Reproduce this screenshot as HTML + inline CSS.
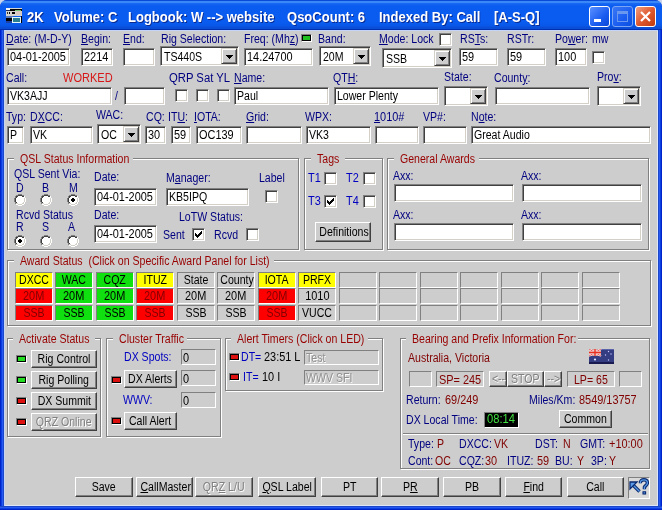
<!DOCTYPE html>
<html><head><meta charset="utf-8"><style>
*{margin:0;padding:0;box-sizing:border-box}
html,body{width:662px;height:510px;overflow:hidden}
body{position:relative;background:#c8d4ec;font-family:"Liberation Sans",sans-serif;font-size:12px}
#frame{position:absolute;left:0;top:0;width:662px;height:510px;border-radius:7px 7px 0 0;background:linear-gradient(to right,#0022cc 0,#0022cc 1px,#0a40e0 1px,#0a40e0 2px,#2858f0 2px,#2858f0 3px,#1a48c8 3px,#1a48c8 659px,#2858f0 659px,#2858f0 660px,#0a40e0 660px,#0a40e0 661px,#0022cc 661px)}
#fbot{position:absolute;left:0;top:506px;width:662px;height:4px;background:linear-gradient(#1a48c8 0,#1a48c8 1px,#2858f0 1px,#2858f0 2px,#0a40e0 2px,#0a40e0 3px,#0022cc 3px)}
#win{position:absolute;left:4px;top:30px;width:654px;height:476px;background:#cdcdcd;box-shadow:inset 1px 1px #c4d4f8,inset -1px -1px #dde6f8}
.t,.gt{position:absolute;white-space:nowrap;line-height:13px;letter-spacing:0}
.t{transform:scaleX(.88);transform-origin:0 0}
.sl{display:inline-block;transform:scaleX(.88);transform-origin:0 0}
.sc{display:inline-block;transform:scaleX(.88)}
.gt{color:#980000;background:#cdcdcd;padding-left:6px}
.e,.st{position:absolute;background:#fff;border:1px solid;border-color:#808080 #fff #fff #808080;box-shadow:inset 1px 1px #404040,inset -1px -1px #d4d0c8;overflow:hidden}
.e span,.st span{position:absolute;top:2px;line-height:13px;white-space:nowrap;letter-spacing:0;color:#000;transform:scaleX(.88);transform-origin:0 0}
.st{background:#cdcdcd;box-shadow:none;border-color:#808080 #fff #fff #808080}
.st span{color:inherit}
.cb{position:absolute;width:13px;height:13px;background:#fff;border:1px solid;border-color:#808080 #fff #fff #808080;box-shadow:inset 1px 1px #404040,inset -1px -1px #d4d0c8}
.rd{position:absolute;width:12px;height:12px;border-radius:50%;background:#fff;border:1px solid;border-color:#808080 #fff #fff #808080}
.rd .dot{position:absolute;left:3px;top:3px;width:4px;height:4px;border-radius:50%;background:#000}
.cbtn{position:absolute;right:1px;top:1px;width:16px;background:#cdcdcd;border:1px solid;border-color:#d4d0c8 #404040 #404040 #d4d0c8;box-shadow:inset 1px 1px #fff,inset -1px -1px #808080}
.cbtn i{position:absolute;left:4px;top:6px;width:0;height:0;border-left:3.5px solid transparent;border-right:3.5px solid transparent;border-top:4px solid #000}
.b{position:absolute;background:#cdcdcd;border:1px solid;border-color:#fff #404040 #404040 #fff;box-shadow:inset -1px -1px #808080;text-align:center;white-space:nowrap;letter-spacing:0}
.g{position:absolute;border:1px solid #808080;box-shadow:inset 1px 1px #fff,1px 1px #fff}
.led{position:absolute;width:11px;height:8px;border:1px solid;border-color:#808080 #fff #fff #808080}
.cell{position:absolute;width:38px;height:16px;border:1px solid;border-color:#808080 #fff #fff #808080;text-align:center;line-height:14px;letter-spacing:0;color:#000}
u{text-decoration:underline}

#titlebar{position:absolute;left:0;top:0;width:662px;height:30px;border-radius:7px 7px 0 0;background:linear-gradient(#0a4ad8 0px,#0a4ad8 1px,#3a88f8 1px,#3a88f8 3px,#1a6af4 3px,#0a5cf0 6px,#0a5cf0 22px,#0858e8 26px,#0a4ed8 27px,#0a4ed8 29px,#0030b0 29px,#0030b0 30px)}
.tt{position:absolute;top:9px;font-weight:bold;font-size:14px;line-height:16px;transform:scaleX(.93);transform-origin:0 0;color:#fff;white-space:nowrap;text-shadow:1px 1px #0a2a90}
.a{position:absolute}
.wb{position:absolute;top:6px;width:21px;height:21px;border:1px solid #fff;border-radius:3px}
</style></head>
<body>
<div id="frame"></div><div id="titlebar"></div><div id="fbot"></div><div id="win"></div>

<div class="wb" style="left:589px;background:linear-gradient(135deg,#5a90ff,#1a5cf0 60%,#0a48d8)"><div class="a" style="left:4px;top:12px;width:7px;height:3px;background:#fff"></div></div>
<div class="wb" style="left:612px;border-color:#7aa4f4;background:linear-gradient(135deg,#3a78f4,#1a5cf0 60%,#0a50e0)"><div class="a" style="left:4px;top:4px;width:11px;height:11px;border:1px solid #6a98ee;border-top-width:3px"></div></div>
<div class="wb" style="left:635px;background:linear-gradient(135deg,#f0a080,#e05a30 50%,#c03a10)"><svg class="a" style="left:4px;top:4px" width="11" height="11"><path d="M1 1L10 10M10 1L1 10" stroke="#fff" stroke-width="2.2"/></svg></div>
<svg class="a" style="left:6px;top:8px" width="16" height="15" shape-rendering="crispEdges">
<rect x="0" y="0" width="16" height="8" fill="#d4d4d0"/>
<rect x="0" y="0" width="4" height="2" fill="#f4f4f4"/>
<rect x="4" y="1" width="12" height="2" fill="#000"/>
<rect x="0" y="2" width="4" height="1" fill="#203050"/>
<rect x="9" y="2" width="6" height="1" fill="#70c070"/>
<rect x="1" y="4" width="1" height="2" fill="#403020"/><rect x="3" y="4" width="1" height="2" fill="#000"/>
<rect x="6" y="4" width="3" height="2" fill="#000"/>
<rect x="10" y="3" width="6" height="4" fill="#d8c8c0"/>
<rect x="0" y="8" width="7" height="2" fill="#5878b8"/>
<rect x="0" y="10" width="6" height="3" fill="#000"/>
<rect x="0" y="13" width="6" height="2" fill="#2040a0"/>
<rect x="6" y="9" width="9" height="6" fill="#e8f8f8"/>
<rect x="7" y="10" width="7" height="4" fill="#2a8090"/>
<rect x="15" y="8" width="1" height="7" fill="#000"/>
</svg>

<div class="tt" style="left:27px">2K</div>
<div class="tt" style="left:54px">Volume: C</div>
<div class="tt" style="left:128px">Logbook: W --&gt; website</div>
<div class="tt" style="left:287px">QsoCount: 6</div>
<div class="tt" style="left:379px">Indexed By: Call</div>
<div class="tt" style="left:494px">[A-S-Q]</div>
<div class="t" style="left:6px;top:33px;color:#000080;transform:scaleX(0.88);"><u>D</u>ate: (M-D-Y)</div>
<div class="t" style="left:81px;top:33px;color:#000080;transform:scaleX(0.88);"><u>B</u>egin:</div>
<div class="t" style="left:123px;top:33px;color:#000080;transform:scaleX(0.88);"><u>E</u>nd:</div>
<div class="t" style="left:161px;top:33px;color:#000080;transform:scaleX(0.88);">Rig Selection:</div>
<div class="t" style="left:244px;top:33px;color:#000080;transform:scaleX(0.88);">Freq: (Mh<u>z</u>)</div>
<div class="led" style="left:301px;top:34px"><div style="width:9px;height:6px;border:1px solid #000;background:#20c020"></div></div>
<div class="t" style="left:318px;top:33px;color:#000080;transform:scaleX(0.88);">Band:</div>
<div class="t" style="left:379px;top:33px;color:#000080;transform:scaleX(0.88);"><u>M</u>ode: Lock</div>
<div class="cb" style="left:439px;top:33px"></div>
<div class="t" style="left:460px;top:33px;color:#000080;transform:scaleX(0.88);">RS<u>T</u>s:</div>
<div class="t" style="left:507px;top:33px;color:#000080;transform:scaleX(0.88);">RSTr:</div>
<div class="t" style="left:555px;top:33px;color:#000080;transform:scaleX(0.88);">Po<u>w</u>er:</div>
<div class="t" style="left:592px;top:33px;color:#000080;transform:scaleX(0.88);">mw</div>
<div class="e" style="left:7px;top:48px;width:63px;height:18px;background:#fff;"><span style="left:2px;transform:scaleX(0.91)">04-01-2005</span></div>
<div class="e" style="left:81px;top:48px;width:32px;height:18px;background:#fff;"><span style="left:2px;transform:scaleX(0.91)">2214</span></div>
<div class="e" style="left:123px;top:48px;width:32px;height:18px;background:#fff;"><span style="left:2px;transform:scaleX(0.88)"></span></div>
<div class="e" style="left:160px;top:46px;width:79px;height:20px"><span style="left:3px;top:4px">TS440S</span><div class="cbtn" style="height:16px"><svg width="7" height="4" style="position:absolute;left:4px;top:6px" shape-rendering="crispEdges"><path d="M0 0h7v1h-1v1h-1v1h-1v1h-1v-1h-1v-1h-1v-1h-1z" fill="#000"/></svg></div></div>
<div class="e" style="left:244px;top:48px;width:69px;height:18px;background:#fff;"><span style="left:2px;transform:scaleX(0.91)">14.24700</span></div>
<div class="e" style="left:319px;top:46px;width:52px;height:20px"><span style="left:3px;top:4px">20M</span><div class="cbtn" style="height:16px"><svg width="7" height="4" style="position:absolute;left:4px;top:6px" shape-rendering="crispEdges"><path d="M0 0h7v1h-1v1h-1v1h-1v1h-1v-1h-1v-1h-1v-1h-1z" fill="#000"/></svg></div></div>
<div class="e" style="left:382px;top:48px;width:70px;height:20px"><span style="left:3px;top:4px">SSB</span><div class="cbtn" style="height:16px"><svg width="7" height="4" style="position:absolute;left:4px;top:6px" shape-rendering="crispEdges"><path d="M0 0h7v1h-1v1h-1v1h-1v1h-1v-1h-1v-1h-1v-1h-1z" fill="#000"/></svg></div></div>
<div class="e" style="left:459px;top:48px;width:39px;height:18px;background:#fff;"><span style="left:2px;transform:scaleX(0.91)">59</span></div>
<div class="e" style="left:507px;top:48px;width:39px;height:18px;background:#fff;"><span style="left:2px;transform:scaleX(0.91)">59</span></div>
<div class="e" style="left:555px;top:48px;width:32px;height:18px;background:#fff;"><span style="left:2px;transform:scaleX(0.91)">100</span></div>
<div class="cb" style="left:592px;top:51px"></div>
<div class="t" style="left:6px;top:72px;color:#000080;transform:scaleX(0.88);">Call:</div>
<div class="t" style="left:63px;top:72px;color:#d81818;transform:scaleX(0.92);">WORKED</div>
<div class="t" style="left:169px;top:72px;color:#000080;transform:scaleX(0.94);">QRP Sat YL</div>
<div class="t" style="left:234px;top:72px;color:#000080;transform:scaleX(0.88);"><u>N</u>ame:</div>
<div class="t" style="left:333px;top:72px;color:#000080;transform:scaleX(0.88);">QT<u>H</u>:</div>
<div class="t" style="left:444px;top:71px;color:#000080;transform:scaleX(0.88);">State:</div>
<div class="t" style="left:494px;top:72px;color:#000080;transform:scaleX(0.88);">Count<u>y</u>:</div>
<div class="t" style="left:597px;top:71px;color:#000080;transform:scaleX(0.88);">Pro<u>v</u>:</div>
<div class="e" style="left:7px;top:87px;width:105px;height:18px;background:#fff;"><span style="left:2px;transform:scaleX(0.88)">VK3AJJ</span></div>
<div class="t" style="left:115px;top:90px;color:#000080;transform:scaleX(0.88);">/</div>
<div class="e" style="left:124px;top:87px;width:41px;height:18px;background:#fff;"><span style="left:2px;transform:scaleX(0.88)"></span></div>
<div class="cb" style="left:175px;top:89px"></div>
<div class="cb" style="left:196px;top:89px"></div>
<div class="cb" style="left:217px;top:89px"></div>
<div class="e" style="left:234px;top:87px;width:95px;height:18px;background:#fff;"><span style="left:2px;transform:scaleX(0.88)">Paul</span></div>
<div class="e" style="left:334px;top:87px;width:105px;height:18px;background:#fff;"><span style="left:2px;transform:scaleX(0.88)">Lower Plenty</span></div>
<div class="e" style="left:444px;top:86px;width:44px;height:20px"><span style="left:3px;top:4px"></span><div class="cbtn" style="height:16px"><svg width="7" height="4" style="position:absolute;left:4px;top:6px" shape-rendering="crispEdges"><path d="M0 0h7v1h-1v1h-1v1h-1v1h-1v-1h-1v-1h-1v-1h-1z" fill="#000"/></svg></div></div>
<div class="e" style="left:495px;top:87px;width:95px;height:18px;background:#fff;"><span style="left:2px;transform:scaleX(0.88)"></span></div>
<div class="e" style="left:597px;top:86px;width:44px;height:20px"><span style="left:3px;top:4px"></span><div class="cbtn" style="height:16px"><svg width="7" height="4" style="position:absolute;left:4px;top:6px" shape-rendering="crispEdges"><path d="M0 0h7v1h-1v1h-1v1h-1v1h-1v-1h-1v-1h-1v-1h-1z" fill="#000"/></svg></div></div>
<div class="t" style="left:6px;top:111px;color:#000080;transform:scaleX(0.88);">Typ:</div>
<div class="t" style="left:30px;top:111px;color:#000080;transform:scaleX(0.88);">D<u>X</u>CC:</div>
<div class="t" style="left:96px;top:109px;color:#000080;transform:scaleX(0.88);">WAC:</div>
<div class="t" style="left:146px;top:111px;color:#000080;transform:scaleX(0.88);">CQ:</div>
<div class="t" style="left:168px;top:111px;color:#000080;transform:scaleX(0.88);">IT<u>U</u>:</div>
<div class="t" style="left:194px;top:111px;color:#000080;transform:scaleX(0.88);"><u>I</u>OTA:</div>
<div class="t" style="left:246px;top:111px;color:#000080;transform:scaleX(0.88);"><u>G</u>rid:</div>
<div class="t" style="left:305px;top:111px;color:#000080;transform:scaleX(0.88);">WPX:</div>
<div class="t" style="left:374px;top:111px;color:#000080;transform:scaleX(0.91);"><u>1</u>010#</div>
<div class="t" style="left:423px;top:111px;color:#000080;transform:scaleX(0.88);">VP#:</div>
<div class="t" style="left:471px;top:111px;color:#000080;transform:scaleX(0.88);">N<u>o</u>te:</div>
<div class="e" style="left:7px;top:126px;width:17px;height:18px;background:#fff;"><span style="left:2px;transform:scaleX(0.88)">P</span></div>
<div class="e" style="left:30px;top:126px;width:63px;height:18px;background:#fff;"><span style="left:2px;transform:scaleX(0.88)">VK</span></div>
<div class="e" style="left:97px;top:124px;width:44px;height:20px"><span style="left:3px;top:4px">OC</span><div class="cbtn" style="height:16px"><svg width="7" height="4" style="position:absolute;left:4px;top:6px" shape-rendering="crispEdges"><path d="M0 0h7v1h-1v1h-1v1h-1v1h-1v-1h-1v-1h-1v-1h-1z" fill="#000"/></svg></div></div>
<div class="e" style="left:145px;top:126px;width:21px;height:18px;background:#fff;"><span style="left:2px;transform:scaleX(0.91)">30</span></div>
<div class="e" style="left:171px;top:126px;width:20px;height:18px;background:#fff;"><span style="left:2px;transform:scaleX(0.91)">59</span></div>
<div class="e" style="left:196px;top:126px;width:46px;height:18px;background:#fff;"><span style="left:2px;transform:scaleX(0.91)">OC139</span></div>
<div class="e" style="left:246px;top:126px;width:56px;height:18px;background:#fff;"><span style="left:2px;transform:scaleX(0.88)"></span></div>
<div class="e" style="left:306px;top:126px;width:65px;height:18px;background:#fff;"><span style="left:2px;transform:scaleX(0.88)">VK3</span></div>
<div class="e" style="left:375px;top:126px;width:44px;height:18px;background:#fff;"><span style="left:2px;transform:scaleX(0.88)"></span></div>
<div class="e" style="left:423px;top:126px;width:44px;height:18px;background:#fff;"><span style="left:2px;transform:scaleX(0.88)"></span></div>
<div class="e" style="left:471px;top:126px;width:180px;height:18px;background:#fff;"><span style="left:2px;transform:scaleX(0.88)">Great Audio</span></div>
<div class="g" style="left:7px;top:158px;width:292px;height:92px"></div>
<div class="gt" style="left:14px;top:153px;width:119px"><span class="sl">QSL Status Information</span></div>
<div class="t" style="left:14px;top:168px;color:#000080;transform:scaleX(0.88);">QSL Sent Via:</div>
<div class="t" style="left:16px;top:182px;color:#000080;transform:scaleX(0.88);">D</div>
<div class="t" style="left:42px;top:182px;color:#000080;transform:scaleX(0.88);">B</div>
<div class="t" style="left:69px;top:182px;color:#000080;transform:scaleX(0.88);">M</div>
<svg class="a" style="left:14px;top:194px" width="12" height="12" shape-rendering="crispEdges"><path d="M4 0h4v1h2v1h1v2h1v4h-1v2h-1v1h-2v1h-4v-1h-2v-1h-1v-2h-1v-4h1v-2h1v-1h2z" fill="#fff"/><path d="M4 0h4v1h2v1h-2v-1h-4v1h-2v2h-1v4h1v2h-1v-2h-1v-4h1v-2h1v-1h2z" fill="#808080"/><path d="M4 1h4v1h2v1h-2v-1h-4v1h-1v1h-1v4h1v1h-1v-1h-1v-4h1v-2h2z" fill="#404040"/><path d="M11 4h-1v4h-1v1h-1v1h-4v-1h-2v1h2v1h4v-1h2v-1h1z" fill="#d4d0c8"/><path d="M12 4h-1v4h-1v2h-2v1h-4v-1h-2v1h2v1h4v-1h2v-1h1v-2h1z" fill="#fff"/></svg>
<svg class="a" style="left:40px;top:194px" width="12" height="12" shape-rendering="crispEdges"><path d="M4 0h4v1h2v1h1v2h1v4h-1v2h-1v1h-2v1h-4v-1h-2v-1h-1v-2h-1v-4h1v-2h1v-1h2z" fill="#fff"/><path d="M4 0h4v1h2v1h-2v-1h-4v1h-2v2h-1v4h1v2h-1v-2h-1v-4h1v-2h1v-1h2z" fill="#808080"/><path d="M4 1h4v1h2v1h-2v-1h-4v1h-1v1h-1v4h1v1h-1v-1h-1v-4h1v-2h2z" fill="#404040"/><path d="M11 4h-1v4h-1v1h-1v1h-4v-1h-2v1h2v1h4v-1h2v-1h1z" fill="#d4d0c8"/><path d="M12 4h-1v4h-1v2h-2v1h-4v-1h-2v1h2v1h4v-1h2v-1h1v-2h1z" fill="#fff"/></svg>
<svg class="a" style="left:67px;top:194px" width="12" height="12" shape-rendering="crispEdges"><path d="M4 0h4v1h2v1h1v2h1v4h-1v2h-1v1h-2v1h-4v-1h-2v-1h-1v-2h-1v-4h1v-2h1v-1h2z" fill="#fff"/><path d="M4 0h4v1h2v1h-2v-1h-4v1h-2v2h-1v4h1v2h-1v-2h-1v-4h1v-2h1v-1h2z" fill="#808080"/><path d="M4 1h4v1h2v1h-2v-1h-4v1h-1v1h-1v4h1v1h-1v-1h-1v-4h1v-2h2z" fill="#404040"/><path d="M11 4h-1v4h-1v1h-1v1h-4v-1h-2v1h2v1h4v-1h2v-1h1z" fill="#d4d0c8"/><path d="M12 4h-1v4h-1v2h-2v1h-4v-1h-2v1h2v1h4v-1h2v-1h1v-2h1z" fill="#fff"/><rect x="4" y="5" width="4" height="2" fill="#000"/><rect x="5" y="4" width="2" height="4" fill="#000"/></svg>
<div class="t" style="left:16px;top:209px;color:#000080;transform:scaleX(0.88);">Rcvd Status</div>
<div class="t" style="left:16px;top:221px;color:#000080;transform:scaleX(0.88);">R</div>
<div class="t" style="left:42px;top:221px;color:#000080;transform:scaleX(0.88);">S</div>
<div class="t" style="left:68px;top:221px;color:#000080;transform:scaleX(0.88);">A</div>
<svg class="a" style="left:14px;top:235px" width="12" height="12" shape-rendering="crispEdges"><path d="M4 0h4v1h2v1h1v2h1v4h-1v2h-1v1h-2v1h-4v-1h-2v-1h-1v-2h-1v-4h1v-2h1v-1h2z" fill="#fff"/><path d="M4 0h4v1h2v1h-2v-1h-4v1h-2v2h-1v4h1v2h-1v-2h-1v-4h1v-2h1v-1h2z" fill="#808080"/><path d="M4 1h4v1h2v1h-2v-1h-4v1h-1v1h-1v4h1v1h-1v-1h-1v-4h1v-2h2z" fill="#404040"/><path d="M11 4h-1v4h-1v1h-1v1h-4v-1h-2v1h2v1h4v-1h2v-1h1z" fill="#d4d0c8"/><path d="M12 4h-1v4h-1v2h-2v1h-4v-1h-2v1h2v1h4v-1h2v-1h1v-2h1z" fill="#fff"/><rect x="4" y="5" width="4" height="2" fill="#000"/><rect x="5" y="4" width="2" height="4" fill="#000"/></svg>
<svg class="a" style="left:40px;top:235px" width="12" height="12" shape-rendering="crispEdges"><path d="M4 0h4v1h2v1h1v2h1v4h-1v2h-1v1h-2v1h-4v-1h-2v-1h-1v-2h-1v-4h1v-2h1v-1h2z" fill="#fff"/><path d="M4 0h4v1h2v1h-2v-1h-4v1h-2v2h-1v4h1v2h-1v-2h-1v-4h1v-2h1v-1h2z" fill="#808080"/><path d="M4 1h4v1h2v1h-2v-1h-4v1h-1v1h-1v4h1v1h-1v-1h-1v-4h1v-2h2z" fill="#404040"/><path d="M11 4h-1v4h-1v1h-1v1h-4v-1h-2v1h2v1h4v-1h2v-1h1z" fill="#d4d0c8"/><path d="M12 4h-1v4h-1v2h-2v1h-4v-1h-2v1h2v1h4v-1h2v-1h1v-2h1z" fill="#fff"/></svg>
<svg class="a" style="left:67px;top:235px" width="12" height="12" shape-rendering="crispEdges"><path d="M4 0h4v1h2v1h1v2h1v4h-1v2h-1v1h-2v1h-4v-1h-2v-1h-1v-2h-1v-4h1v-2h1v-1h2z" fill="#fff"/><path d="M4 0h4v1h2v1h-2v-1h-4v1h-2v2h-1v4h1v2h-1v-2h-1v-4h1v-2h1v-1h2z" fill="#808080"/><path d="M4 1h4v1h2v1h-2v-1h-4v1h-1v1h-1v4h1v1h-1v-1h-1v-4h1v-2h2z" fill="#404040"/><path d="M11 4h-1v4h-1v1h-1v1h-4v-1h-2v1h2v1h4v-1h2v-1h1z" fill="#d4d0c8"/><path d="M12 4h-1v4h-1v2h-2v1h-4v-1h-2v1h2v1h4v-1h2v-1h1v-2h1z" fill="#fff"/></svg>
<div class="t" style="left:94px;top:171px;color:#000080;transform:scaleX(0.88);">Date:</div>
<div class="e" style="left:94px;top:188px;width:63px;height:18px;background:#fff;"><span style="left:2px;transform:scaleX(0.91)">04-01-2005</span></div>
<div class="t" style="left:94px;top:209px;color:#000080;transform:scaleX(0.88);">Date:</div>
<div class="e" style="left:94px;top:225px;width:63px;height:18px;background:#fff;"><span style="left:2px;transform:scaleX(0.91)">04-01-2005</span></div>
<div class="t" style="left:166px;top:172px;color:#000080;transform:scaleX(0.88);">M<u>a</u>nager:</div>
<div class="e" style="left:166px;top:188px;width:83px;height:18px;background:#fff;"><span style="left:2px;transform:scaleX(0.88)">KB5IPQ</span></div>
<div class="t" style="left:259px;top:172px;color:#000080;transform:scaleX(0.88);">Label</div>
<div class="cb" style="left:265px;top:190px"></div>
<div class="t" style="left:179px;top:211px;color:#000080;transform:scaleX(0.88);">LoTW Status:</div>
<div class="t" style="left:163px;top:229px;color:#000080;transform:scaleX(0.88);">Sent</div>
<div class="cb" style="left:192px;top:228px"><svg width="7" height="7" style="position:absolute;left:2px;top:2px" shape-rendering="crispEdges"><path d="M6 0h1v3h-1v1h-1v1h-1v1h-1v1h-1v-1h-1v-1h-1v-3h1v1h1v1h1v-1h1v-1h1v-1h1z" fill="#000"/></svg></div>
<div class="t" style="left:214px;top:229px;color:#000080;transform:scaleX(0.88);">Rcvd</div>
<div class="cb" style="left:246px;top:228px"></div>
<div class="g" style="left:304px;top:158px;width:79px;height:92px"></div>
<div class="gt" style="left:311px;top:153px;width:34px"><span class="sl">Tags</span></div>
<div class="t" style="left:308px;top:172px;color:#0000c0;transform:scaleX(0.91);">T1</div>
<div class="cb" style="left:324px;top:172px"></div>
<div class="t" style="left:346px;top:172px;color:#0000c0;transform:scaleX(0.91);">T2</div>
<div class="cb" style="left:363px;top:172px"></div>
<div class="t" style="left:308px;top:195px;color:#0000c0;transform:scaleX(0.91);">T3</div>
<div class="cb" style="left:324px;top:195px"><svg width="7" height="7" style="position:absolute;left:2px;top:2px" shape-rendering="crispEdges"><path d="M6 0h1v3h-1v1h-1v1h-1v1h-1v1h-1v-1h-1v-1h-1v-3h1v1h1v1h1v-1h1v-1h1v-1h1z" fill="#000"/></svg></div>
<div class="t" style="left:346px;top:195px;color:#0000c0;transform:scaleX(0.91);">T4</div>
<div class="cb" style="left:363px;top:195px"></div>
<div class="b" style="left:315px;top:222px;width:56px;height:20px;line-height:18px;color:#000;"><span class="sc">Definitions</span></div>
<div class="g" style="left:387px;top:158px;width:262px;height:92px"></div>
<div class="gt" style="left:394px;top:153px;width:85px"><span class="sl">General Awards</span></div>
<div class="t" style="left:393px;top:170px;color:#000080;transform:scaleX(0.88);">Axx:</div>
<div class="e" style="left:394px;top:184px;width:120px;height:18px;background:#fff;"><span style="left:2px;transform:scaleX(0.88)"></span></div>
<div class="t" style="left:521px;top:170px;color:#000080;transform:scaleX(0.88);">Axx:</div>
<div class="e" style="left:522px;top:184px;width:120px;height:18px;background:#fff;"><span style="left:2px;transform:scaleX(0.88)"></span></div>
<div class="t" style="left:393px;top:209px;color:#000080;transform:scaleX(0.88);">Axx:</div>
<div class="e" style="left:394px;top:223px;width:120px;height:18px;background:#fff;"><span style="left:2px;transform:scaleX(0.88)"></span></div>
<div class="t" style="left:521px;top:209px;color:#000080;transform:scaleX(0.88);">Axx:</div>
<div class="e" style="left:522px;top:223px;width:120px;height:18px;background:#fff;"><span style="left:2px;transform:scaleX(0.88)"></span></div>
<div class="g" style="left:7px;top:260px;width:644px;height:66px"></div>
<div class="gt" style="left:14px;top:255px;width:260px"><span class="sl">Award Status&nbsp; (Click on Specific Award Panel for List)</span></div>
<div class="cell" style="left:15px;top:272px;background:#ffff00;color:#000"><span class="sc" style="transform:scaleX(0.88)">DXCC</span></div>
<div class="cell" style="left:15px;top:288px;background:#ff0000;color:#800000"><span class="sc" style="transform:scaleX(0.91)">20M</span></div>
<div class="cell" style="left:15px;top:305px;background:#ff0000;color:#800000"><span class="sc" style="transform:scaleX(0.88)">SSB</span></div>
<div class="cell" style="left:55px;top:272px;background:#10e010;color:#000"><span class="sc" style="transform:scaleX(0.88)">WAC</span></div>
<div class="cell" style="left:55px;top:288px;background:#10e010;color:#000"><span class="sc" style="transform:scaleX(0.91)">20M</span></div>
<div class="cell" style="left:55px;top:305px;background:#10e010;color:#000"><span class="sc" style="transform:scaleX(0.88)">SSB</span></div>
<div class="cell" style="left:96px;top:272px;background:#10e010;color:#000"><span class="sc" style="transform:scaleX(0.88)">CQZ</span></div>
<div class="cell" style="left:96px;top:288px;background:#10e010;color:#000"><span class="sc" style="transform:scaleX(0.91)">20M</span></div>
<div class="cell" style="left:96px;top:305px;background:#10e010;color:#000"><span class="sc" style="transform:scaleX(0.88)">SSB</span></div>
<div class="cell" style="left:136px;top:272px;background:#ffff00;color:#000"><span class="sc" style="transform:scaleX(0.88)">ITUZ</span></div>
<div class="cell" style="left:136px;top:288px;background:#ff0000;color:#800000"><span class="sc" style="transform:scaleX(0.91)">20M</span></div>
<div class="cell" style="left:136px;top:305px;background:#ff0000;color:#800000"><span class="sc" style="transform:scaleX(0.88)">SSB</span></div>
<div class="cell" style="left:177px;top:272px;color:#000"><span class="sc" style="transform:scaleX(0.88)">State</span></div>
<div class="cell" style="left:177px;top:288px;color:#000"><span class="sc" style="transform:scaleX(0.91)">20M</span></div>
<div class="cell" style="left:177px;top:305px;color:#000"><span class="sc" style="transform:scaleX(0.88)">SSB</span></div>
<div class="cell" style="left:217px;top:272px;color:#000"><span class="sc" style="transform:scaleX(0.88)">County</span></div>
<div class="cell" style="left:217px;top:288px;color:#000"><span class="sc" style="transform:scaleX(0.91)">20M</span></div>
<div class="cell" style="left:217px;top:305px;color:#000"><span class="sc" style="transform:scaleX(0.88)">SSB</span></div>
<div class="cell" style="left:258px;top:272px;background:#ffff00;color:#000"><span class="sc" style="transform:scaleX(0.88)">IOTA</span></div>
<div class="cell" style="left:258px;top:288px;background:#ff0000;color:#800000"><span class="sc" style="transform:scaleX(0.91)">20M</span></div>
<div class="cell" style="left:258px;top:305px;background:#ff0000;color:#800000"><span class="sc" style="transform:scaleX(0.88)">SSB</span></div>
<div class="cell" style="left:298px;top:272px;background:#ffff00;color:#000"><span class="sc" style="transform:scaleX(0.88)">PRFX</span></div>
<div class="cell" style="left:298px;top:288px;color:#000"><span class="sc" style="transform:scaleX(0.91)">1010</span></div>
<div class="cell" style="left:298px;top:305px;color:#000"><span class="sc" style="transform:scaleX(0.88)">VUCC</span></div>
<div class="cell" style="left:339px;top:272px;color:#000"><span class="sc" style="transform:scaleX(0.88)"></span></div>
<div class="cell" style="left:339px;top:288px;color:#000"><span class="sc" style="transform:scaleX(0.88)"></span></div>
<div class="cell" style="left:339px;top:305px;color:#000"><span class="sc" style="transform:scaleX(0.88)"></span></div>
<div class="cell" style="left:379px;top:272px;color:#000"><span class="sc" style="transform:scaleX(0.88)"></span></div>
<div class="cell" style="left:379px;top:288px;color:#000"><span class="sc" style="transform:scaleX(0.88)"></span></div>
<div class="cell" style="left:379px;top:305px;color:#000"><span class="sc" style="transform:scaleX(0.88)"></span></div>
<div class="cell" style="left:420px;top:272px;color:#000"><span class="sc" style="transform:scaleX(0.88)"></span></div>
<div class="cell" style="left:420px;top:288px;color:#000"><span class="sc" style="transform:scaleX(0.88)"></span></div>
<div class="cell" style="left:420px;top:305px;color:#000"><span class="sc" style="transform:scaleX(0.88)"></span></div>
<div class="cell" style="left:460px;top:272px;color:#000"><span class="sc" style="transform:scaleX(0.88)"></span></div>
<div class="cell" style="left:460px;top:288px;color:#000"><span class="sc" style="transform:scaleX(0.88)"></span></div>
<div class="cell" style="left:460px;top:305px;color:#000"><span class="sc" style="transform:scaleX(0.88)"></span></div>
<div class="cell" style="left:501px;top:272px;color:#000"><span class="sc" style="transform:scaleX(0.88)"></span></div>
<div class="cell" style="left:501px;top:288px;color:#000"><span class="sc" style="transform:scaleX(0.88)"></span></div>
<div class="cell" style="left:501px;top:305px;color:#000"><span class="sc" style="transform:scaleX(0.88)"></span></div>
<div class="cell" style="left:541px;top:272px;color:#000"><span class="sc" style="transform:scaleX(0.88)"></span></div>
<div class="cell" style="left:541px;top:288px;color:#000"><span class="sc" style="transform:scaleX(0.88)"></span></div>
<div class="cell" style="left:541px;top:305px;color:#000"><span class="sc" style="transform:scaleX(0.88)"></span></div>
<div class="cell" style="left:582px;top:272px;color:#000"><span class="sc" style="transform:scaleX(0.88)"></span></div>
<div class="cell" style="left:582px;top:288px;color:#000"><span class="sc" style="transform:scaleX(0.88)"></span></div>
<div class="cell" style="left:582px;top:305px;color:#000"><span class="sc" style="transform:scaleX(0.88)"></span></div>
<div class="g" style="left:7px;top:338px;width:94px;height:99px"></div>
<div class="gt" style="left:13px;top:333px;width:82px"><span class="sl">Activate Status</span></div>
<div class="led" style="left:16px;top:355px"><div style="width:9px;height:6px;border:1px solid #000;background:#22dd22"></div></div>
<div class="b" style="left:31px;top:350px;width:66px;height:18px;line-height:16px;color:#000;"><span class="sc">Rig Control</span></div>
<div class="led" style="left:16px;top:376px"><div style="width:9px;height:6px;border:1px solid #000;background:#22dd22"></div></div>
<div class="b" style="left:31px;top:371px;width:66px;height:18px;line-height:16px;color:#000;"><span class="sc">Rig Polling</span></div>
<div class="led" style="left:16px;top:397px"><div style="width:9px;height:6px;border:1px solid #000;background:#dd1010"></div></div>
<div class="b" style="left:31px;top:392px;width:66px;height:18px;line-height:16px;color:#000;"><span class="sc">DX Summit</span></div>
<div class="led" style="left:16px;top:418px"><div style="width:9px;height:6px;border:1px solid #000;background:#dd1010"></div></div>
<div class="b" style="left:31px;top:413px;width:66px;height:18px;line-height:16px;color:#808080;text-shadow:1px 1px #fff"><span class="sc">QRZ Online</span></div>
<div class="g" style="left:106px;top:338px;width:115px;height:99px"></div>
<div class="gt" style="left:113px;top:333px;width:74px"><span class="sl">Cluster Traffic</span></div>
<div class="t" style="left:124px;top:351px;color:#0000c0;transform:scaleX(0.88);">DX Spots:</div>
<div class="st" style="left:181px;top:349px;width:35px;height:16px;color:#000;"><span style="left:1px;top:2px;transform:scaleX(0.91)">0</span></div>
<div class="led" style="left:111px;top:376px"><div style="width:9px;height:6px;border:1px solid #000;background:#dd1010"></div></div>
<div class="b" style="left:124px;top:370px;width:53px;height:18px;line-height:16px;color:#000;"><span class="sc">DX Alerts</span></div>
<div class="st" style="left:181px;top:370px;width:35px;height:16px;color:#000;"><span style="left:1px;top:2px;transform:scaleX(0.91)">0</span></div>
<div class="t" style="left:123px;top:394px;color:#0000c0;transform:scaleX(0.88);">WWV:</div>
<div class="st" style="left:181px;top:392px;width:35px;height:16px;color:#000;"><span style="left:1px;top:2px;transform:scaleX(0.91)">0</span></div>
<div class="led" style="left:111px;top:417px"><div style="width:9px;height:6px;border:1px solid #000;background:#dd1010"></div></div>
<div class="b" style="left:124px;top:412px;width:53px;height:18px;line-height:16px;color:#000;"><span class="sc">Call Alert</span></div>
<div class="g" style="left:225px;top:338px;width:158px;height:53px"></div>
<div class="gt" style="left:231px;top:333px;width:137px"><span class="sl">Alert Timers (Click on LED)</span></div>
<div class="led" style="left:229px;top:353px"><div style="width:9px;height:6px;border:1px solid #000;background:#dd1010"></div></div>
<div class="t" style="left:241px;top:351px;color:#0000c0;transform:scaleX(0.88);">DT=</div>
<div class="t" style="left:264px;top:351px;color:#000;transform:scaleX(0.91);">23:51 L</div>
<div class="st" style="left:304px;top:350px;width:75px;height:15px;color:#909090;text-shadow:1px 1px #fff"><span style="left:1px;top:1px;transform:scaleX(0.88)">Test</span></div>
<div class="led" style="left:229px;top:373px"><div style="width:9px;height:6px;border:1px solid #000;background:#dd1010"></div></div>
<div class="t" style="left:243px;top:371px;color:#0000c0;transform:scaleX(0.88);">IT=</div>
<div class="t" style="left:262px;top:371px;color:#000;transform:scaleX(0.91);">10 I</div>
<div class="st" style="left:304px;top:370px;width:75px;height:15px;color:#909090;text-shadow:1px 1px #fff"><span style="left:1px;top:1px;transform:scaleX(0.88)">WWV SFI</span></div>
<div class="g" style="left:400px;top:338px;width:250px;height:131px"></div>
<div class="gt" style="left:406px;top:333px;width:172px"><span class="sl">Bearing and Prefix Information For:</span></div>
<div class="t" style="left:408px;top:352px;color:#800000;transform:scaleX(0.88);">Australia, Victoria</div>
<svg class="a" style="left:589px;top:349px" width="25" height="15" viewBox="0 0 25 15">
<rect width="25" height="15" fill="#343c82"/>
<rect y="0" width="25" height="1" fill="#5a62a8"/>
<rect y="13" width="25" height="2" fill="#181a50"/>
<rect width="12" height="7" fill="#c89090"/>
<path d="M0 0L12 7M12 0L0 7" stroke="#fff" stroke-width="2"/>
<path d="M0 0L12 7M12 0L0 7" stroke="#e03030" stroke-width="0.8"/>
<path d="M6 0V7M0 3.5H12" stroke="#f0d0d0" stroke-width="2.6"/>
<path d="M6 0V7M0 3.5H12" stroke="#e83020" stroke-width="1.4"/>
<circle cx="6" cy="10.5" r="1.1" fill="#e8e8ff"/>
<circle cx="19.5" cy="2.5" r="0.7" fill="#c8c8ff"/><circle cx="16.5" cy="6" r="0.7" fill="#c8c8ff"/>
<circle cx="22" cy="5" r="0.7" fill="#c8c8ff"/><circle cx="19.5" cy="11" r="0.7" fill="#c8c8ff"/>
</svg>
<div class="st" style="left:409px;top:371px;width:23px;height:16px;color:#000;"><span style="left:3px;top:2px;transform:scaleX(0.88)"></span></div>
<div class="st" style="left:436px;top:371px;width:48px;height:16px;color:#800000;"><span style="left:2px;top:2px;transform:scaleX(0.91)">SP= 245</span></div>
<div class="b" style="left:489px;top:371px;width:18px;height:16px;line-height:14px;color:#808080;text-shadow:1px 1px #fff"><span class="sc">&lt;--</span></div>
<div class="b" style="left:507px;top:371px;width:37px;height:16px;line-height:14px;color:#808080;text-shadow:1px 1px #fff"><span class="sc">STOP</span></div>
<div class="b" style="left:544px;top:371px;width:18px;height:16px;line-height:14px;color:#808080;text-shadow:1px 1px #fff"><span class="sc">--&gt;</span></div>
<div class="st" style="left:567px;top:371px;width:48px;height:16px;color:#800000;"><span style="left:6px;top:2px;transform:scaleX(0.88)">LP= 65</span></div>
<div class="st" style="left:619px;top:371px;width:23px;height:16px;color:#000;"><span style="left:3px;top:2px;transform:scaleX(0.88)"></span></div>
<div class="t" style="left:406px;top:394px;color:#000080;transform:scaleX(0.88);">Return:</div>
<div class="t" style="left:445px;top:394px;color:#800000;transform:scaleX(0.91);">69/249</div>
<div class="t" style="left:529px;top:394px;color:#000080;transform:scaleX(0.88);">Miles/Km:</div>
<div class="t" style="left:579px;top:394px;color:#800000;transform:scaleX(0.91);">8549/13757</div>
<div class="t" style="left:406px;top:414px;color:#000080;transform:scaleX(0.88);">DX Local Time:</div>
<div class="a" style="left:484px;top:412px;width:35px;height:16px;background:#000;border:1px solid;border-color:#808080 #fff #fff #808080;color:#40e040;text-align:center;line-height:13px;"><span class="sc" style="transform:scaleX(.93)">08:14</span></div>
<div class="b" style="left:559px;top:410px;width:53px;height:18px;line-height:16px;color:#000;"><span class="sc">Common</span></div>
<div class="a" style="left:403px;top:433px;width:245px;height:2px;border-top:1px solid #808080;border-bottom:1px solid #fff"></div>
<div class="t" style="left:408px;top:438px;color:#000080;transform:scaleX(0.88);">Type:</div>
<div class="t" style="left:437px;top:438px;color:#800000;transform:scaleX(0.88);">P</div>
<div class="t" style="left:459px;top:438px;color:#000080;transform:scaleX(0.88);">DXCC:</div>
<div class="t" style="left:494px;top:438px;color:#800000;transform:scaleX(0.88);">VK</div>
<div class="t" style="left:535px;top:438px;color:#000080;transform:scaleX(0.88);">DST:</div>
<div class="t" style="left:563px;top:438px;color:#800000;transform:scaleX(0.88);">N</div>
<div class="t" style="left:580px;top:438px;color:#000080;transform:scaleX(0.88);">GMT:</div>
<div class="t" style="left:609px;top:438px;color:#800000;transform:scaleX(0.91);">+10:00</div>
<div class="t" style="left:408px;top:455px;color:#000080;transform:scaleX(0.88);">Cont:</div>
<div class="t" style="left:435px;top:455px;color:#800000;transform:scaleX(0.88);">OC</div>
<div class="t" style="left:459px;top:455px;color:#000080;transform:scaleX(0.88);">CQZ:</div>
<div class="t" style="left:485px;top:455px;color:#800000;transform:scaleX(0.91);">30</div>
<div class="t" style="left:507px;top:455px;color:#000080;transform:scaleX(0.88);">ITUZ:</div>
<div class="t" style="left:537px;top:455px;color:#800000;transform:scaleX(0.91);">59</div>
<div class="t" style="left:555px;top:455px;color:#000080;transform:scaleX(0.88);">BU:</div>
<div class="t" style="left:577px;top:455px;color:#800000;transform:scaleX(0.88);">Y</div>
<div class="t" style="left:591px;top:455px;color:#000080;transform:scaleX(0.88);">3P:</div>
<div class="t" style="left:609px;top:455px;color:#800000;transform:scaleX(0.88);">Y</div>
<div class="b" style="left:75px;top:477px;width:58px;height:20px;line-height:18px;color:#000;"><span class="sc">Save</span></div>
<div class="b" style="left:136px;top:477px;width:57px;height:20px;line-height:18px;color:#000;"><span class="sc"><u>C</u>allMaster</span></div>
<div class="b" style="left:195px;top:477px;width:58px;height:20px;line-height:18px;color:#808080;text-shadow:1px 1px #fff"><span class="sc">QR<u>Z</u> L/U</span></div>
<div class="b" style="left:258px;top:477px;width:58px;height:20px;line-height:18px;color:#000;"><span class="sc"><u>Q</u>SL Label</span></div>
<div class="b" style="left:321px;top:477px;width:57px;height:20px;line-height:18px;color:#000;"><span class="sc">PT</span></div>
<div class="b" style="left:381px;top:477px;width:58px;height:20px;line-height:18px;color:#000;"><span class="sc">P<u>R</u></span></div>
<div class="b" style="left:443px;top:477px;width:58px;height:20px;line-height:18px;color:#000;"><span class="sc">PB</span></div>
<div class="b" style="left:505px;top:477px;width:57px;height:20px;line-height:18px;color:#000;"><span class="sc"><u>F</u>ind</span></div>
<div class="b" style="left:567px;top:477px;width:57px;height:20px;line-height:18px;color:#000;"><span class="sc">Call</span></div>
<div class="a" style="left:628px;top:477px;width:22px;height:22px;border:1px solid;border-color:#808080 #fff #fff #808080;background:#dadada"><svg width="20" height="20" style="position:absolute;left:0;top:0" viewBox="0 0 20 20">
<path d="M3.5 6.5L10.5 13.5" stroke="#0a2a70" stroke-width="3.4"/>
<path d="M3.5 6.5L10.5 13.5" stroke="#5a9ae8" stroke-width="1.2"/>
<path d="M1 4H8L1 11Z" fill="#5a9ae8" stroke="#0a2a70" stroke-width="1.3" stroke-linejoin="miter"/>
<path d="M11.3 5.2C11.3 2.8 12.8 1.8 14.9 1.8C17 1.8 18.4 3 18.4 4.9C18.4 7 16.2 7.6 15.4 9.2V11.2" fill="none" stroke="#0a2a70" stroke-width="3.4"/>
<path d="M11.3 5.2C11.3 2.8 12.8 1.8 14.9 1.8C17 1.8 18.4 3 18.4 4.9C18.4 7 16.2 7.6 15.4 9.2V11.2" fill="none" stroke="#5a9ae8" stroke-width="1.3"/>
<rect x="14" y="13.8" width="2.6" height="2.2" fill="#5a9ae8" stroke="#0a2a70" stroke-width="1.1"/>
</svg></div>
</body></html>
